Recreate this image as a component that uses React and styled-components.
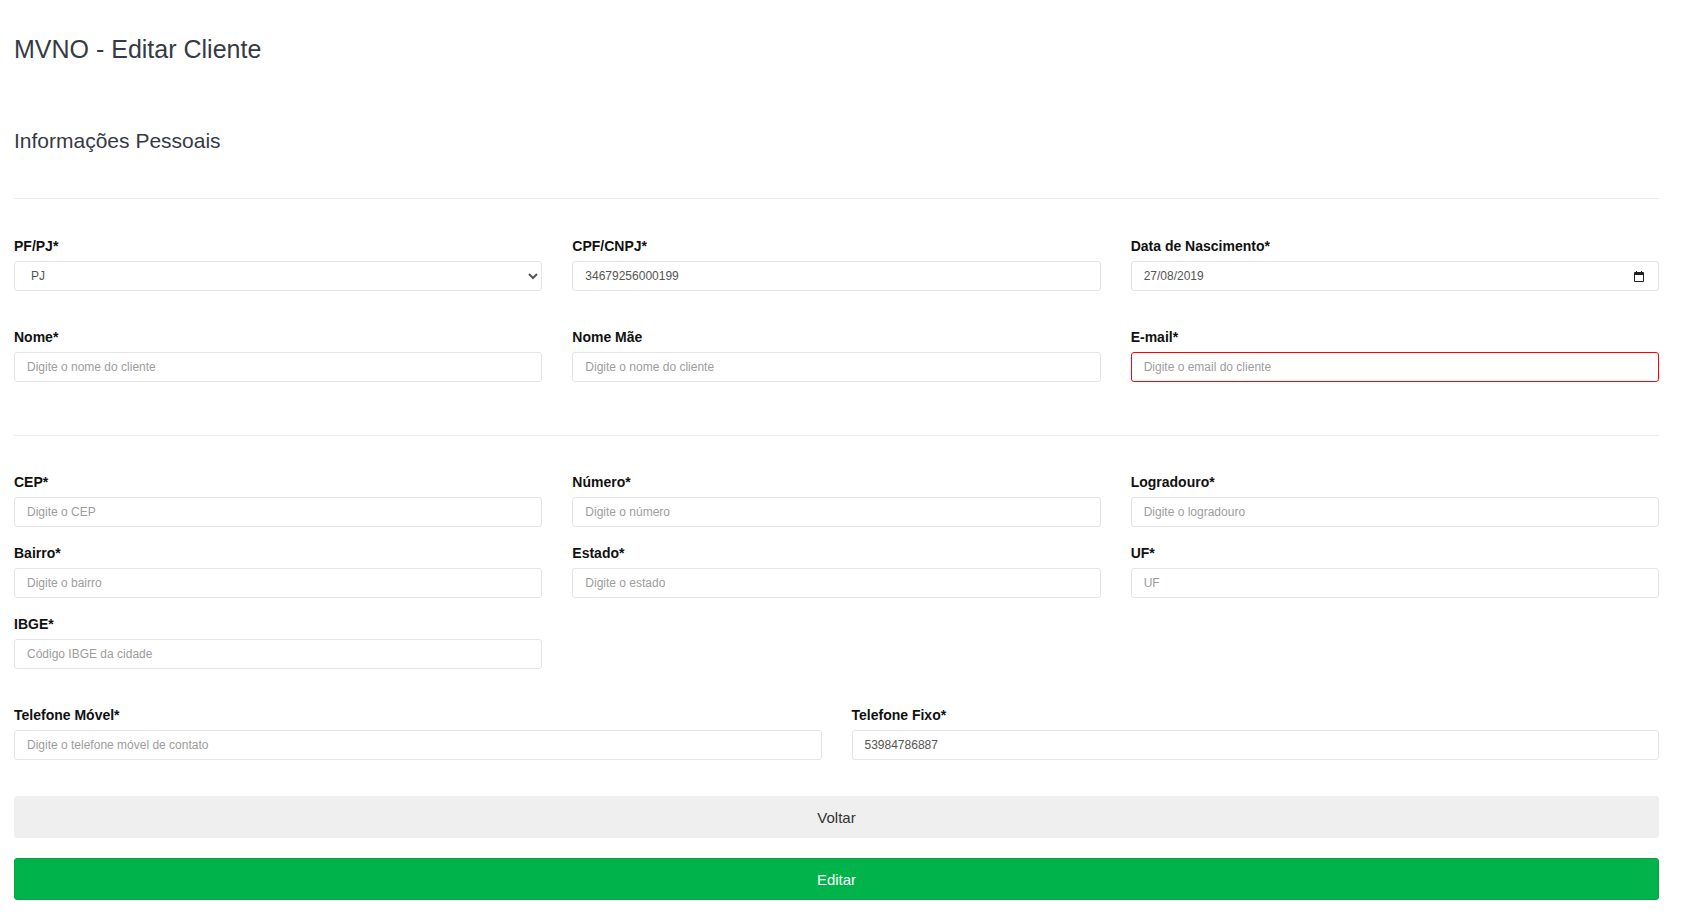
import React from "react";
import styled, { createGlobalStyle } from "styled-components";

const GlobalStyle = createGlobalStyle`
  html, body {
    margin: 0;
    padding: 0;
    background: #fff;
    overflow: hidden;
  }

  body {
    font-family: "Liberation Sans", Arial, sans-serif;
  }

  * {
    box-sizing: border-box;
  }
`;

const Page = styled.div`
  padding: 0 24px 14px 14px;
`;

const Title = styled.h1`
  margin: 34px 0 0;
  font-size: 25px;
  line-height: 30px;
  font-weight: 400;
  color: #353a46;
`;

const SectionTitle = styled.h2`
  margin: 64px 0 0;
  font-size: 21px;
  line-height: 25px;
  font-weight: 400;
  color: #353a46;
`;

const Divider = styled.hr`
  margin: ${(p) => p.$top}px 0 0;
  border: 0;
  border-top: 1px solid #ececec;
  height: 0;
`;

const FieldGrid = styled.div`
  display: grid;
  grid-template-columns: repeat(${(p) => p.$cols}, 1fr);
  column-gap: 30px;
  row-gap: ${(p) => p.$rowGap}px;
  margin-top: ${(p) => p.$top}px;
`;

const Field = styled.div`
  display: flex;
  flex-direction: column;
  min-width: 0;
`;

const Label = styled.label`
  display: block;
  font-size: 14px;
  line-height: 17px;
  font-weight: 700;
  color: #111;
  margin-bottom: 6px;
`;

const Input = styled.input`
  width: 100%;
  height: 30px;
  padding: 0 12px;
  border: 1px solid ${(p) => (p.$invalid ? "#ff0000" : "#e4e4e4")};
  border-radius: 3px;
  background: #fff;
  font-family: "Liberation Sans", Arial, sans-serif;
  font-size: 12px;
  color: #555;
  outline: none;

  &::placeholder {
    color: #9d9d9d;
  }
`;

const Select = styled.select`
  width: 100%;
  height: 30px;
  padding: 0 8px 0 12px;
  border: 1px solid #e4e4e4;
  border-radius: 3px;
  background: #fff;
  font-family: "Liberation Sans", Arial, sans-serif;
  font-size: 12px;
  color: #555;
  outline: none;
`;

const DateBox = styled.div`
  position: relative;
`;

const CalendarIcon = styled.svg`
  position: absolute;
  right: 15px;
  top: 10px;
  width: 10px;
  height: 11px;
  pointer-events: none;
`;

const Button = styled.button`
  display: block;
  width: 100%;
  height: 42px;
  margin-top: ${(p) => p.$top}px;
  border: 1px solid ${(p) => (p.$primary ? "#0c9f45" : "#efefef")};
  border-radius: 3px;
  background: ${(p) => (p.$primary ? "#00b44b" : "#efefef")};
  color: ${(p) => (p.$primary ? "#fff" : "#333")};
  font-family: "Liberation Sans", Arial, sans-serif;
  font-size: 15px;
  cursor: pointer;
`;

const TextField = ({ label, placeholder, value, invalid }) => (
  <Field>
    <Label>{label}</Label>
    <Input
      type="text"
      placeholder={placeholder}
      defaultValue={value}
      $invalid={invalid}
    />
  </Field>
);

export default function App() {
  return (
    <>
      <GlobalStyle />
      <Page>
        <Title>MVNO - Editar Cliente</Title>
        <SectionTitle>Informações Pessoais</SectionTitle>
        <Divider $top={45} />

        <FieldGrid $cols={3} $rowGap={38} $top={39}>
          <Field>
            <Label>PF/PJ*</Label>
            <Select defaultValue="PJ">
              <option value="PF">PF</option>
              <option value="PJ">PJ</option>
            </Select>
          </Field>
          <TextField label="CPF/CNPJ*" value="34679256000199" />
          <Field>
            <Label>Data de Nascimento*</Label>
            <DateBox>
              <Input type="text" defaultValue="27/08/2019" />
              <CalendarIcon viewBox="0 0 10 11">
                <path d="M2 0h1v1.5H2zM7 0h1v1.5H7z" fill="#222" />
                <path
                  d="M0.5 1.5h9v9h-9z"
                  fill="none"
                  stroke="#222"
                  strokeWidth="1"
                />
                <path d="M0.5 1.5h9v2.5h-9z" fill="#222" />
              </CalendarIcon>
            </DateBox>
          </Field>
          <TextField label="Nome*" placeholder="Digite o nome do cliente" />
          <TextField label="Nome Mãe" placeholder="Digite o nome do cliente" />
          <TextField
            label="E-mail*"
            placeholder="Digite o email do cliente"
            invalid
          />
        </FieldGrid>

        <Divider $top={53} />

        <FieldGrid $cols={3} $rowGap={18} $top={38}>
          <TextField label="CEP*" placeholder="Digite o CEP" />
          <TextField label="Número*" placeholder="Digite o número" />
          <TextField label="Logradouro*" placeholder="Digite o logradouro" />
          <TextField label="Bairro*" placeholder="Digite o bairro" />
          <TextField label="Estado*" placeholder="Digite o estado" />
          <TextField label="UF*" placeholder="UF" />
          <TextField label="IBGE*" placeholder="Código IBGE da cidade" />
        </FieldGrid>

        <FieldGrid $cols={2} $rowGap={18} $top={38}>
          <TextField
            label="Telefone Móvel*"
            placeholder="Digite o telefone móvel de contato"
          />
          <TextField label="Telefone Fixo*" value="53984786887" />
        </FieldGrid>

        <Button type="button" $top={36}>
          Voltar
        </Button>
        <Button type="button" $top={20} $primary>
          Editar
        </Button>
      </Page>
    </>
  );
}
